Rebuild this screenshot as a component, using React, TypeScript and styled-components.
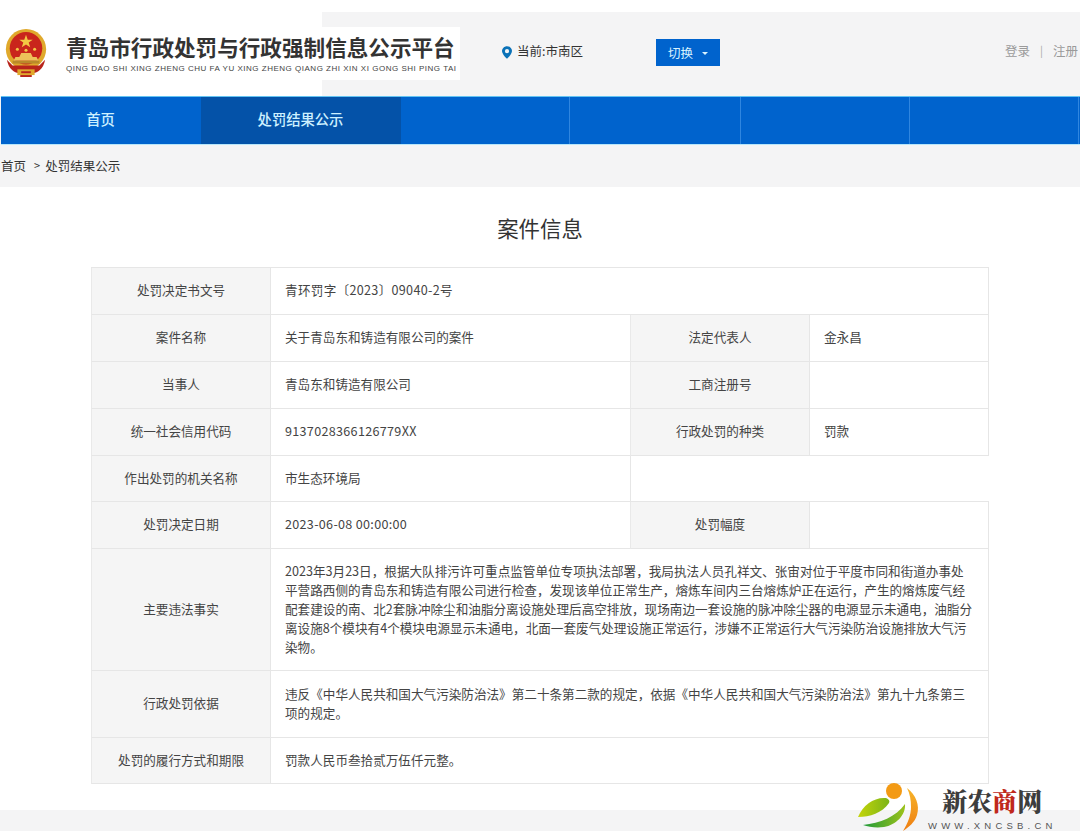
import React from "react";
import styled, { createGlobalStyle } from "styled-components";

const GlobalStyle = createGlobalStyle`
  html, body {
    margin: 0;
    padding: 0;
    background: #f4f4f5;
  }
  body {
    font-family: "Noto Sans CJK SC", "Noto Sans", sans-serif;
    color: #333;
  }
`;

const navItems = [
  { label: "首页", width: 200 },
  { label: "处罚结果公示", width: 200, active: true },
  { label: "", width: 169 },
  { label: "", width: 171 },
  { label: "", width: 169 },
  { label: "", width: 169 },
];

const factText =
  "2023年3月23日，根据大队排污许可重点监管单位专项执法部署，我局执法人员孔祥文、张宙对位于平度市同和街道办事处平营路西侧的青岛东和铸造有限公司进行检查，发现该单位正常生产，熔炼车间内三台熔炼炉正在运行，产生的熔炼废气经配套建设的南、北2套脉冲除尘和油脂分离设施处理后高空排放，现场南边一套设施的脉冲除尘器的电源显示未通电，油脂分离设施8个模块有4个模块电源显示未通电，北面一套废气处理设施正常运行，涉嫌不正常运行大气污染防治设施排放大气污染物。";

const basisText =
  "违反《中华人民共和国大气污染防治法》第二十条第二款的规定，依据《中华人民共和国大气污染防治法》第九十九条第三项的规定。";

const Emblem = () => (
  <svg width="46" height="50" viewBox="0 0 48 52">
    <circle cx="24" cy="21" r="21" fill="#e0a92c" />
    <circle cx="24" cy="20" r="17" fill="#c9251c" />
    <polygon
      points="24,6 25.8,11 31,11 26.8,14 28.4,19 24,16 19.6,19 21.2,14 17,11 22.2,11"
      fill="#f3c744"
    />
    <circle cx="15" cy="21" r="1.6" fill="#f3c744" />
    <circle cx="24" cy="22" r="1.6" fill="#f3c744" />
    <circle cx="33" cy="21" r="1.6" fill="#f3c744" />
    <path d="M11 33 L37 33 L35 29 L31 29 L29 25 L19 25 L17 29 L13 29 Z" fill="#edc25a" />
    <rect x="10" y="33" width="28" height="3" fill="#b98a2a" />
    <path d="M4 32 C6 42 12 46 18 46 L18 50 L30 50 L30 46 C36 46 42 42 44 32 L38 38 L10 38 Z" fill="#b8241b" />
    <rect x="15" y="42" width="18" height="6" fill="#e0a92c" />
    <rect x="19" y="44" width="10" height="2" fill="#b8241b" />
  </svg>
);

const PinIcon = () => (
  <PinSvg width="10" height="13" viewBox="0 0 11 14">
    <path
      fillRule="evenodd"
      d="M5.5 0C2.5 0 0 2.4 0 5.4 0 9 5.5 14 5.5 14S11 9 11 5.4C11 2.4 8.5 0 5.5 0ZM5.5 3.2a2.3 2.3 0 1 1 0 4.6 2.3 2.3 0 0 1 0-4.6Z"
      fill="#0b72b8"
    />
  </PinSvg>
);

const WatermarkLogo = () => (
  <svg width="62" height="50" viewBox="0 0 62 50">
    <defs>
      <linearGradient id="leaf" x1="0" y1="0" x2="1" y2="0">
        <stop offset="0" stopColor="#c4d40a" />
        <stop offset="1" stopColor="#7cb518" />
      </linearGradient>
      <linearGradient id="swoosh" x1="0" y1="0" x2="1" y2="0">
        <stop offset="0" stopColor="#1f9a3a" />
        <stop offset="1" stopColor="#9cc21a" />
      </linearGradient>
      <linearGradient id="arc" x1="0" y1="0" x2="0" y2="1">
        <stop offset="0" stopColor="#f7b52a" />
        <stop offset="1" stopColor="#ee7d12" />
      </linearGradient>
    </defs>
    <circle cx="36" cy="10" r="8" fill="#f39a14" />
    <path d="M0 36 C5 24 16 16 28 17 C31 18 32 20 31 22 C24 32 12 36 0 36 Z" fill="url(#leaf)" />
    <path d="M5 44 C22 42 38 36 47 23 C48 34 38 44 26 46 C18 47 11 46 5 44 Z" fill="url(#swoosh)" />
    <path d="M49 7 C58 14 62 24 59 34 C57 41 51 46 45 50 C50 42 53 34 53 26 C53 19 52 13 49 7 Z" fill="url(#arc)" />
  </svg>
);

export default function App() {
  return (
    <Page>
      <GlobalStyle />
      <Header>
        <Brand>
          <Emblem />
          <BrandText>
            <BrandTitle>青岛市行政处罚与行政强制信息公示平台</BrandTitle>
            <BrandSub>QING DAO SHI XING ZHENG CHU FA YU XING ZHENG QIANG ZHI XIN XI GONG SHI PING TAI</BrandSub>
          </BrandText>
        </Brand>
        <Location>
          <PinIcon />
          <span>当前:市南区</span>
        </Location>
        <SwitchButton>
          切换
          <Caret />
        </SwitchButton>
        <UserLinks>
          <span>登录</span>
          <Divider>|</Divider>
          <span>注册</span>
        </UserLinks>
      </Header>

      <Nav>
        {navItems.map((item, index) => (
          <NavItem key={index} $width={item.width} $active={item.active}>
            {item.label}
          </NavItem>
        ))}
      </Nav>

      <Breadcrumb>
        <span>首页</span>
        <Chevron>&gt;</Chevron>
        <span>处罚结果公示</span>
      </Breadcrumb>

      <Content>
        <Heading>案件信息</Heading>
        <InfoTable>
          <Label>处罚决定书文号</Label>
          <Value $span={3} $numeric>
            青环罚字〔2023〕09040-2号
          </Value>

          <Label>案件名称</Label>
          <Value>关于青岛东和铸造有限公司的案件</Value>
          <Label>法定代表人</Label>
          <Value $end>金永昌</Value>

          <Label>当事人</Label>
          <Value>青岛东和铸造有限公司</Value>
          <Label>工商注册号</Label>
          <Value $end />

          <Label>统一社会信用代码</Label>
          <Value $numeric>9137028366126779XX</Value>
          <Label>行政处罚的种类</Label>
          <Value $end>罚款</Value>

          <Label>作出处罚的机关名称</Label>
          <Value>市生态环境局</Value>
          <BlankCell />

          <Label>处罚决定日期</Label>
          <Value $numeric>2023-06-08 00:00:00</Value>
          <Label>处罚幅度</Label>
          <Value $end />

          <Label>主要违法事实</Label>
          <Value $span={3}>{factText}</Value>

          <Label>行政处罚依据</Label>
          <Value $span={3}>{basisText}</Value>

          <Label>处罚的履行方式和期限</Label>
          <Value $span={3}>罚款人民币叁拾贰万伍仟元整。</Value>
        </InfoTable>
      </Content>

      <Footer />

      <Watermark>
        <WatermarkLogo />
        <WatermarkText>
          <WatermarkName>
            新农<em>商</em>网
          </WatermarkName>
          <WatermarkUrl>WWW.XNCSB.CN</WatermarkUrl>
        </WatermarkText>
      </Watermark>
    </Page>
  );
}

const Page = styled.div`
  position: relative;
  width: 1080px;
  height: 831px;
  overflow: hidden;
  background: #f4f4f5;
`;

const Header = styled.header`
  display: flex;
  align-items: center;
  box-sizing: border-box;
  height: 84px;
  margin-top: 12px;
  padding-bottom: 5px;
  background: linear-gradient(90deg, #fff 322px, #f4f4f5 322px);
  box-shadow: 0 -12px 0 #fff;
`;

const Brand = styled.div`
  display: flex;
  align-items: center;
  gap: 17px;
  width: 457px;
  height: 53px;
  padding-left: 3px;
  margin-top: 4px;
  background: #fff;
`;

const BrandText = styled.div`
  display: flex;
  flex-direction: column;
  gap: 3px;
`;

const BrandTitle = styled.div`
  font-size: 21.6px;
  line-height: 28px;
  font-weight: 700;
  color: #333;
  white-space: nowrap;
`;

const BrandSub = styled.div`
  font-family: "Liberation Sans", Arial, sans-serif;
  font-size: 8px;
  line-height: 10px;
  letter-spacing: 0.51px;
  color: #444;
  white-space: nowrap;
`;

const Location = styled.div`
  display: flex;
  align-items: center;
  gap: 5px;
  margin-left: 42px;
  margin-top: -3px;
  width: 154px;
  font-size: 12.5px;
  color: #333;
`;

const PinSvg = styled.svg`
  margin-top: 4px;
`;

const SwitchButton = styled.button`
  display: flex;
  align-items: center;
  justify-content: center;
  gap: 9px;
  width: 64px;
  height: 27px;
  margin-top: 1px;
  padding: 0;
  border: none;
  background: #0063cd;
  color: #d8f3ff;
  font-family: inherit;
  font-size: 12.5px;
`;

const Caret = styled.i`
  width: 0;
  height: 0;
  margin-top: 3px;
  border-left: 3px solid transparent;
  border-right: 3px solid transparent;
  border-top: 3px solid #d8f3ff;
`;

const UserLinks = styled.div`
  display: flex;
  align-items: center;
  gap: 10px;
  margin-left: auto;
  margin-top: -3px;
  width: 75px;
  white-space: nowrap;
  font-size: 12.5px;
  color: #9a9a9a;
`;

const Divider = styled.span`
  font-size: 11px;
  color: #aaa;
`;

const Nav = styled.nav`
  display: flex;
  height: 47px;
  margin-left: 1px;
  background: #0063cd;
  border-top: 1px solid #63c4f2;
  border-bottom: 1px solid #b8e6fa;
`;

const NavItem = styled.div<{ $width: number; $active?: boolean }>`
  display: flex;
  align-items: center;
  justify-content: center;
  box-sizing: border-box;
  width: ${(p) => p.$width}px;
  padding-bottom: 4px;
  background: ${(p) => (p.$active ? "#0452a8" : "transparent")};
  border-right: 1px solid ${(p) => (p.$active ? "#0452a8" : "#2f86e0")};
  color: #cdf0ff;
  font-size: 14.3px;
  font-weight: 500;

  &:first-child {
    border-right-color: #0063cd;
  }
`;

const Breadcrumb = styled.div`
  display: flex;
  align-items: center;
  box-sizing: border-box;
  height: 42px;
  padding: 0 0 2px 1px;
  font-size: 12.5px;
  color: #333;
`;

const Chevron = styled.span`
  margin: 0 5px 0 8px;
  font-size: 11px;
`;

const Content = styled.main`
  height: 623px;
  padding: 0 91px;
  background: #fff;
`;

const Heading = styled.h1`
  margin: 0;
  padding: 25px 0 23px;
  font-size: 21.4px;
  line-height: 32px;
  font-weight: 400;
  text-align: center;
  color: #333;
`;

const InfoTable = styled.div`
  display: grid;
  grid-template-columns: 179px 360px 179px 180px;
  grid-template-rows: 47px 47px 47px 47px 46px 47px 122px 67px 46px;
  box-sizing: border-box;
  width: 898px;
  height: 516px;
  border-top: 1px solid #e6e6e6;
  font-size: 12.6px;
  line-height: 19px;
  color: #444;
`;

const Label = styled.div`
  display: flex;
  align-items: center;
  justify-content: center;
  padding-bottom: 3px;
  background: #f5f5f5;
  border-bottom: 1px solid #e6e6e6;
  border-left: 1px solid #e9e9e9;
`;

const Value = styled.div<{ $span?: number; $numeric?: boolean; $end?: boolean }>`
  grid-column: span ${(p) => p.$span ?? 1};
  display: flex;
  align-items: center;
  box-sizing: border-box;
  padding: 0 14px 3px 14px;
  letter-spacing: ${(p) => (p.$numeric ? "0.3px" : "0")};
  border-bottom: 1px solid #e6e6e6;
  border-left: 1px solid #e6e6e6;
  border-right: ${(p) => (p.$span === 3 || p.$end ? "1px solid #e6e6e6" : "none")};
`;

const BlankCell = styled.div`
  grid-column: span 2;
  border-bottom: 1px solid #e6e6e6;
  border-left: 1px solid #e6e6e6;
`;

const Footer = styled.footer`
  height: 21px;
  background: #f4f4f5;
`;

const Watermark = styled.div`
  position: absolute;
  left: 858px;
  top: 781px;
  display: flex;
  gap: 8px;
`;

const WatermarkText = styled.div`
  display: flex;
  flex-direction: column;
  align-items: center;
  padding-top: 3px;
`;

const WatermarkName = styled.div`
  font-family: "Noto Serif CJK SC", "Noto Sans CJK SC", serif;
  font-size: 25px;
  line-height: 32px;
  font-weight: 900;
  color: #3d3d3d;
  white-space: nowrap;

  em {
    font-style: normal;
    color: #c0281c;
  }
`;

const WatermarkUrl = styled.div`
  margin-top: 4px;
  font-family: "Liberation Sans", Arial, sans-serif;
  font-size: 9.5px;
  line-height: 12px;
  letter-spacing: 4.2px;
  color: #555;
  white-space: nowrap;
`;
